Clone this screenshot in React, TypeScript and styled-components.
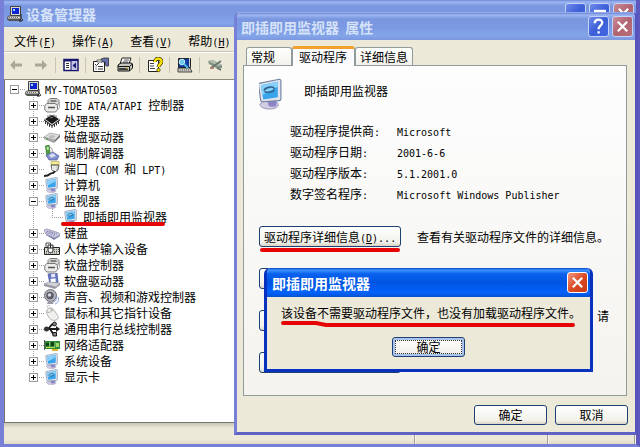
import React from 'react';
import styled, { createGlobalStyle, css } from 'styled-components';

const GlobalStyle = createGlobalStyle`
  * { box-sizing: border-box; }
  body {
    margin: 0;
    color: #000;
    font: 12px/16px "Noto Sans CJK SC", sans-serif;
  }
  button { font: inherit; color: inherit; padding: 0; margin: 0; }
`;

/* Half-width characters: exactly half of the 12px ideograph cell */
const Latin = styled.span`
  font-family: "DejaVu Sans Mono", monospace;
  font-size: 10px;
  line-height: 10px;
  white-space: pre;
`;

/* ---------- window frames ---------- */

const Desktop = styled.main`
  position: relative;
  min-height: 100vh;
  display: flex;
  overflow: hidden;
  background: #7b93dc;
`;

const MainWindow = styled.section`
  flex: 1;
  min-width: 0;
  display: flex;
  flex-direction: column;
  border: solid #7780d6;
  border-width: 0 4px 3px;
  border-right-color: #5c58bd;
`;

const TitleBar = styled.header<{ $active?: boolean; $height: number }>`
  display: flex;
  align-items: center;
  gap: 3px;
  height: ${(p) => p.$height}px;
  color: ${(p) => (p.$active ? '#fff' : '#d5e2f8')};
  font-size: 14px;
  line-height: 20px;
  font-weight: 700;
  background: ${(p) =>
    p.$active
      ? 'linear-gradient(#0843c8 0, #3d93ff 7%, #0a62ee 20%, #0054e3 50%, #0363fb 85%, #0450d0 100%)'
      : 'linear-gradient(#6d83d2 0, #9db7f2 7%, #7a96df 22%, #7b98e2 50%, #84a5ea 85%, #7b96de 100%)'};
`;

const WindowTitle = styled.h1`
  flex: 1;
  margin: 0;
  font: inherit;
  white-space: pre;
`;

const MainTitleBar = styled(TitleBar)`
  padding: 0 2px 0 3px;
`;

const TitleButton = styled.button<{ $tone: 'blue' | 'dimRed' | 'red' }>`
  display: flex;
  align-items: center;
  justify-content: center;
  width: 21px;
  height: 21px;
  border: 1px solid ${(p) => (p.$tone === 'red' ? '#fff' : '#c3d2f6')};
  border-radius: 3px;
  background: ${(p) =>
    ({
      blue: 'linear-gradient(135deg, #6f8bea, #3d60d8 50%, #4167e0)',
      dimRed: 'linear-gradient(135deg, #c98d98, #b06470 50%, #b86e78)',
      red: 'linear-gradient(135deg, #f09a80, #dc4a26 50%, #c93a16)',
    })[p.$tone]};
`;

/* ---------- main window ---------- */

const MenuBar = styled.nav`
  display: flex;
  gap: 16px;
  height: 25px;
  padding: 3px 10px 0;
  align-items: center;
  background: #ece9d8;
  border-bottom: 1px solid #cbc7b5;
`;

const MenuButton = styled.button`
  border: 0;
  background: none;
  white-space: nowrap;
`;

const ToolBar = styled.div`
  display: flex;
  align-items: center;
  height: 28px;
  padding: 0 5px 3px;
  background: #ece9d8;
  border-top: 1px solid #fff;
  border-bottom: 1px solid #8d8b7c;
`;

const ToolGroup = styled.div`
  display: flex;
  gap: 8px;
  padding: 0 6px 0 7px;
  & + & { border-left: 1px solid #c9c5b2; }
  &:first-child { padding-left: 0; }
`;

const ToolButton = styled.button`
  display: flex;
  border: 0;
  background: none;
`;

const TreePane = styled.div`
  flex: 1;
  padding: 1px 5px;
  background: #fff;
  border-left: 1px solid #77766c;
`;

const StatusBar = styled.footer`
  display: grid;
  grid-template-columns: 412px 133px 1fr;
  height: 22px;
  padding-top: 2px;
  background: linear-gradient(#c9c5b4, #ece9d8 25%, #ece9d8 80%, #dfdbc8);
  border-top: 1px solid #77766c;
`;

const StatusCell = styled.div`
  border-right: 2px groove #f5f3ea;
`;

/* ---------- tree ---------- */

const dotsDown = 'repeating-linear-gradient(#a09f98 0 1px, transparent 1px 2px)';
const dotsAcross = 'repeating-linear-gradient(90deg, #a09f98 0 1px, transparent 1px 2px)';

const TreeList = styled.ul`
  margin: 0;
  padding: 0;
  list-style: none;
`;

const TreeRow = styled.li<{ $root?: boolean }>`
  display: flex;
  align-items: center;
  height: 16px;
  padding-left: ${(p) => (p.$root ? 0 : 19)}px;
  white-space: nowrap;
`;

const Passing = styled.span`
  width: 19px;
  height: 16px;
  background: ${dotsDown} 4px 0 / 1px 16px no-repeat;
`;

const Branch = styled.span<{ $down: 'none' | 'half' | 'full' }>`
  display: flex;
  align-items: center;
  width: 15px;
  height: 16px;
  background:
    ${dotsAcross} 4px 8px / 11px 1px no-repeat,
    ${dotsDown} 4px 0 / 1px ${(p) => ({ none: 0, half: 8, full: 16 })[p.$down]}px no-repeat;
`;

const Expander = styled.button`
  display: flex;
  width: 9px;
  height: 9px;
  border: 1px solid #9a9a96;
  background: #fff;
`;

const TreeLabel = styled.span`
  padding-left: 4px;
`;

/* ---------- properties dialog ---------- */

const Dialog = styled.section`
  position: absolute;
  top: 12px;
  left: 234px;
  right: 2px;
  display: flex;
  flex-direction: column;
  border: 3px solid #7780d6;
  border-top: 1px solid #92a9ec;
  border-right-color: #5653bd;
  border-bottom-color: #6163c4;
  border-radius: 6px 6px 0 0;
  overflow: hidden;
  background: #ece9d8;
`;

const DialogTitleBar = styled(TitleBar)`
  padding: 0 2px 0 4px;
`;

const TabStrip = styled.div`
  display: flex;
  align-items: flex-end;
  height: 25px;
  padding: 0 9px;
`;

const Tab = styled.button<{ $active?: boolean }>`
  position: relative;
  height: 18px;
  border: 1px solid #919b9c;
  border-bottom: 0;
  border-radius: 3px 3px 0 0;
  padding: 0 4px;
  text-align: left;
  background: linear-gradient(#fff, #f2f1ea);
  ${(p) =>
    p.$active &&
    css`
      height: 20px;
      margin-bottom: -1px;
      border-top: 3px solid #f2a12d;
      background: #fcfcfe;
      padding: 0 7px 2px 6px;
    `}
  &:first-child { width: 46px; }
`;

const TabPanel = styled.div`
  margin: 0 8px 0 6px;
  height: 331px;
  padding: 12px 17px 0 15px;
  border: 1px solid #919b9c;
  background: linear-gradient(#fdfdfe, #f4f3ee);
`;

const DeviceHeading = styled.div`
  display: flex;
  gap: 14px;
  height: 42px;
`;

const DeviceName = styled.span`
  padding-top: 5px;
`;

const Facts = styled.dl`
  display: grid;
  grid-template-columns: 107px 1fr;
  margin: 0 0 22px;
  padding-left: 31px;
  line-height: 22px;
  dt, dd { margin: 0; height: 21px; }
`;

const ActionList = styled.div`
  display: grid;
  gap: 21px;
`;

const ActionRow = styled.div`
  display: grid;
  grid-template-columns: 142px 192px;
  column-gap: 16px;
  height: 21px;
  align-items: center;
`;

const XpButton = styled.button<{ $focused?: boolean }>`
  height: 20px;
  border: 1px solid #1d4170;
  border-radius: 3px;
  background: linear-gradient(#fff, #f2f1ea 80%, #d9d4c6);
  white-space: nowrap;
  line-height: 16px;
  ${(p) =>
    p.$focused &&
    css`
      width: 73px;
      box-shadow: inset 0 0 0 2px #a9c2ee;
      outline: 1px dotted #333;
      outline-offset: -4px;
    `}
`;

const ActionButton = styled(XpButton)`
  position: relative;
  height: 21px;
  padding-left: 4px;
  text-align: left;
`;

const RedBar = styled.span`
  position: absolute;
  left: 0;
  right: 0;
  top: 21px;
  height: 4px;
  border-radius: 2px;
  background: #e60404;
`;

const ActionText = styled.span`
  white-space: nowrap;
`;

const WrappedActionText = styled.span`
  align-self: start;
  text-align: right;
  line-height: 12px;
`;

const DialogFooter = styled.div`
  display: flex;
  justify-content: flex-end;
  gap: 8px;
  padding: 9px 7px 7px;
  ${XpButton} { width: 73px; }
`;

/* ---------- message box ---------- */

const MessageBox = styled.section`
  position: absolute;
  top: 268px;
  left: 264px;
  right: 47px;
  border: 3px solid #0831c0;
  border-top: 0;
  border-radius: 6px 6px 0 0;
  background: #ece9d8;
  overflow: hidden;
`;

const MessageTitleBar = styled(TitleBar)`
  margin: 0 -3px;
  padding: 0 5px 0 8px;
`;

const MessageBody = styled.div`
  display: flex;
  flex-direction: column;
  align-items: center;
  padding: 8px 0 12px;
`;

const MessageText = styled.p`
  position: relative;
  align-self: flex-start;
  margin: 0 0 16px 14px;
  white-space: nowrap;
`;

const MarkerStroke = styled.svg`
  position: absolute;
  left: 0;
  top: 15px;
`;

const ItemMarker = styled.span`
  position: absolute;
  left: -22px;
  right: 2px;
  top: 14px;
  height: 4px;
  border-radius: 2px;
  background: #e60404;
`;

const MarkedLabel = styled.span`
  position: relative;
`;

/* ---------- icons ---------- */

const Svg = ({ children, size = 16 }: { children: React.ReactNode; size?: number }) => (
  <svg width={size} height={size} viewBox="0 0 16 16" aria-hidden="true">{children}</svg>
);

const HostIcon = () => (
  <Svg>
    <path d="M3.5 .5h10v9h-10z" fill="#d8d8d0" stroke="#444" />
    <path d="M5 2h7v6H5z" fill="#0c23d0" />
    <path d="M6 3h2v2H6z" fill="#9fd4ff" />
    <path d="M1.5 10h11.500l1.500 3H0z" fill="#e6e6dd" stroke="#333" strokeWidth=".8" />
    <path d="M0 13h14v2H2z" fill="#555" />
    <path d="M2 11.500h9" stroke="#666" strokeDasharray="1 1" />
    <path d="M14 8v5l-2 2h3l1-2" fill="none" stroke="#222" />
  </Svg>
);

const CardIcon = () => (
  <Svg>
    <path d="M6 1.500h7l2 2v3l-2 2H6l-2-2v-3z" fill="#d4d4d0" stroke="#7a7a78" />
    <path d="M6.500 4h6" stroke="#666" strokeWidth="1.500" />
    <path d="M3 6.500h8l2.500 2v4l-2 2.500H3L.8 13V8.500z" fill="#ececea" stroke="#7a7a78" />
    <path d="M4 10.500h7" stroke="#555" strokeWidth="1.500" />
    <path d="M13.500 13l2-2.500v-5" stroke="#aaa" fill="none" />
  </Svg>
);

const ChipIcon = () => (
  <Svg>
    <path d="M1 6l7-4 7 4-7 5z" fill="#1a1a1a" />
    <path d="M0 6l8 6 8-6v1.500l-8 6-8-6z" fill="#3a3a3a" />
    <path d="M1.500 8v3M3.500 9.500v3M5.500 11v3M8 12v3M10.500 11v3M12.500 9.500v3M14.500 8v3" stroke="#333" />
    <path d="M4 2.500v2M6 1.500v2M10 1.500v2M12 2.500v2" stroke="#555" />
    <path d="M6 5l3-1" stroke="#aaa" strokeWidth=".7" />
  </Svg>
);

const DiskIcon = () => (
  <Svg>
    <path d="M0 8l6-4 10 2-5 5z" fill="#dedede" stroke="#9a9a9a" strokeWidth=".7" />
    <path d="M0 8v2l10 4 1-3z" fill="#a4a4a4" />
    <path d="M11 11l5-5v2l-6 6z" fill="#6e6e6e" />
    <ellipse cx="8" cy="7.500" rx="3" ry="1.500" fill="#bcbcbc" />
    <path d="M2 9.500l2 1" stroke="#3aa23a" />
  </Svg>
);

const ModemIcon = () => (
  <Svg>
    <path d="M1.500 1l3.500-1 1 8-3 4z" fill="#4ca23d" stroke="#2c6d28" strokeWidth=".7" />
    <path d="M2.500 2l2-.5.500 3-2 .5z" fill="#bfe6a6" />
    <path d="M2 10l7-3 6 4-2 4H5z" fill="#7f8fd0" stroke="#555f96" strokeWidth=".7" />
    <path d="M5 10l4-2 3 3-5 2z" fill="#d6daf2" />
    <path d="M6 2c2 1 3 3 2 5" stroke="#999" fill="none" />
  </Svg>
);

const PortIcon = () => (
  <Svg>
    <path d="M7 .5h8v3H7z" fill="#f7ef98" stroke="#b5ac4a" strokeWidth=".7" />
    <path d="M7 4h8l-1 5-3 2-3-2z" fill="#d2d2ca" stroke="#444" strokeWidth=".8" />
    <path d="M10.500 10c0 3-3 1.500-4.500 3S3 15 0 15" stroke="#222" strokeWidth="1.800" fill="none" />
    <path d="M9 5v4M11 5v5" stroke="#fff" />
  </Svg>
);

const MonitorShape = ({ mark }: { mark?: boolean }) => (
  <>
    <path d="M2.500 13.500c0-1 2-2 5-2s4.500 1 4.500 2-1.500 2.300-4.500 2.300-5-1.200-5-2.300z" fill="#d0cde2" stroke="#8986ae" strokeWidth=".4" />
    <path d="M6 10.500l5 1v2.500c-1 .8-3 .8-4 0z" fill="#8d86c6" />
    <path d="M2 2.500L12.500 .4c.4 0 .7.200.8.700v9.400c0 .6-.2.900-.7.900L3.700 12c-.5 0-.7-.2-.8-.6L1.700 3.200c0-.4 0-.6.300-.7z" fill="#e2e3ec" stroke="#6f83a2" strokeWidth=".6" />
    <path d="M2.900 3.500L11.700 1.700v8L4.200 10.800z" fill="#38a4ea" />
    <path d="M2.900 3.500l8.800-1.800v2.500L3.800 8.500z" fill="#86d0fa" />
    {mark && <path d="M4.500 6.200c1.200-2 5-2.400 5.500-.8M4.800 6.800c2 .6 4 .2 5.200-.8" fill="none" stroke="#2f5f8d" strokeWidth=".8" />}
  </>
);

const ComputerIcon = () => <Svg><MonitorShape /></Svg>;
const MonitorIcon = () => <Svg><MonitorShape mark /></Svg>;

const KeyboardIcon = () => (
  <Svg>
    <path d="M0 5l3-1 12 4 1 2-6 3-8-4z" fill="#cfcfe4" stroke="#8888ac" strokeWidth=".7" />
    <path d="M3 6l9 4M2 7l8 4M5 6l8 3" stroke="#7f7fa8" strokeDasharray="1.500 1" />
    <path d="M2 9l8 4 6-3v1l-6 4-8-5z" fill="#8383ae" />
  </Svg>
);

const HidIcon = () => (
  <Svg>
    <path d="M.5 6.500h15v7H.5z" fill="#d7d7cf" stroke="#222" />
    <path d="M10 8.500h5M2 10.500h13M2 12h12" stroke="#555" strokeDasharray="1 1" />
    <path d="M4 4h5v5c0 2-1 2.500-2.500 2.500S4 11 4 9z" fill="#fff" stroke="#222" />
    <path d="M4 7h5M6.500 4v3" stroke="#222" />
    <path d="M6.500 4V2H2v5" stroke="#444" fill="none" />
  </Svg>
);

const FloppyIcon = () => (
  <Svg>
    <path d="M4 1l9-1 1 9-8 2z" fill="#6576c4" stroke="#414f96" strokeWidth=".7" />
    <path d="M7 1l4-.5.3 3.500-4 .5z" fill="#e4e7f6" />
    <path d="M6.500 6l5-.7.3 4-5 1z" fill="#fff" />
    <path d="M0 11l5-2 11 1-4 4z" fill="#d4d4da" stroke="#8b8b95" strokeWidth=".7" />
    <path d="M0 11v2l11 3 5-4v-2l-4 4z" fill="#9999a6" />
  </Svg>
);

const SoundIcon = () => (
  <Svg>
    <circle cx="6.500" cy="6.500" r="6" fill="#b5b5bd" stroke="#6c6c76" />
    <circle cx="6" cy="6.500" r="3.800" fill="#5d5d68" />
    <circle cx="5.500" cy="6" r="1.800" fill="#d8d8e0" />
    <path d="M4 12l-1 3h6l1-3" fill="#9b9ba6" />
    <path d="M12 8c1 2 0 4-2 5M14 8c1.500 3 0 6-3 7" fill="none" stroke="#7b8fe0" strokeWidth=".9" />
  </Svg>
);

const MouseIcon = () => (
  <Svg>
    <path d="M3 5c3-4 6-2 9 3 3 4 3 6 0 7-3 1-6 0-8-4-1-2-2-4-1-6z" fill="#f0f0ee" stroke="#9e9e9a" strokeWidth=".8" />
    <path d="M3 7c2 1 5 0 6-3M6 3l2 3" fill="none" stroke="#a9a9a5" />
    <path d="M4 3C2 1 4 0 6 1" stroke="#b9b9b4" fill="none" />
  </Svg>
);

const UsbIcon = () => (
  <Svg>
    <path d="M2 8h11M4 8l4-4.500h3M6 8l3 4.500h2" fill="none" stroke="#1c1c1c" strokeWidth="1.800" />
    <circle cx="2.500" cy="8" r="2.500" fill="#333" />
    <path d="M12 5l4 3-4 3z" fill="#1c1c1c" />
    <circle cx="10.500" cy="3" r="1.900" fill="#888" stroke="#1c1c1c" />
    <path d="M9 11.500h3.500V15H9z" fill="#888" stroke="#1c1c1c" />
  </Svg>
);

const NetworkIcon = () => (
  <Svg>
    <path d="M0 4h16v8H0z" fill="#2d8a35" />
    <path d="M.5 3v10" stroke="#555" />
    <path d="M2 6h3v3H2zM7 5h3v4H7z" fill="#143f1a" />
    <path d="M12 6h3v4h-3z" fill="#a5d86c" />
    <path d="M2 10.500h9" stroke="#c2d850" />
    <path d="M8 12h6v2H8z" fill="#d9b92f" />
    <path d="M5.500 5v5M11 5v5" stroke="#7fc270" />
  </Svg>
);

const ArrowIcon = ({ back }: { back?: boolean }) => (
  <Svg>
    <path d={back ? 'M1 8l5-5v3.500h7v3H6V13z' : 'M14 8L9 3v3.500H2v3h7V13z'} fill="#a9a796" />
  </Svg>
);

const PaneIcon = () => (
  <Svg>
    <path d="M1 2.500h14v11H1z" fill="#fff" stroke="#16166c" strokeWidth="1.500" />
    <path d="M1 3h14v1.500H1z" fill="#16166c" />
    <path d="M8 4h6v9H8z" fill="#c2c2e4" />
    <path d="M8 4v9" stroke="#16166c" />
    <path d="M3 6.500h3M3 8.500h3M3 10.500h3" stroke="#333" />
    <path d="M13 5.500v6L9.500 8.500z" fill="#16166c" />
  </Svg>
);

const PropertiesIcon = () => (
  <Svg>
    <path d="M.5 4.500h11v10H.5z" fill="#fff" stroke="#222" />
    <path d="M2 7l1.500 1.500L6 6M5 9.500h5M5 12h5" fill="none" stroke="#333" />
    <path d="M2.500 10h1M2.500 12h1" stroke="#333" />
    <path d="M8 2l3-1h4.500v8h-2.500l-1-4H8z" fill="#6671ae" stroke="#222" strokeWidth=".7" />
    <path d="M4 3h5v2H4z" fill="#eee" stroke="#333" strokeWidth=".7" />
  </Svg>
);

const PrintIcon = () => (
  <Svg>
    <path d="M5 1h9l-2 6H3z" fill="#fff" stroke="#222" />
    <path d="M7 3h5M6 5h5" stroke="#555" />
    <path d="M1 8l3-2h10l1.500 1v4l-3 3H1z" fill="#c8c8bf" stroke="#111" />
    <path d="M1 9.500h11.500l3-2.500M12.500 10v4" fill="none" stroke="#111" />
    <path d="M2 12h9" stroke="#111" strokeWidth="1.500" />
    <path d="M9 11h2" stroke="#e5d93d" />
  </Svg>
);

const HelpIcon = () => (
  <Svg>
    <path d="M1.500 3.500h10v11h-10z" fill="#fff" stroke="#222" />
    <path d="M3 6.500h4M3 9h4M3 11.500h5" stroke="#444" />
    <path d="M8 5c0-5 7-4 6.500 0-.3 2-3 2.500-3 5" fill="none" stroke="#3a3500" strokeWidth="3.600" />
    <path d="M8 5c0-5 7-4 6.500 0-.3 2-3 2.500-3 5" fill="none" stroke="#ffe800" strokeWidth="2.300" />
    <circle cx="11.500" cy="13" r="1.700" fill="#ffe800" stroke="#3a3500" strokeWidth=".7" />
  </Svg>
);

const ScanIcon = () => (
  <Svg>
    <path d="M1.500 1.500h12v9h-12z" fill="#0f3c9e" stroke="#222" />
    <path d="M12.500 1v9" stroke="#ccc" />
    <path d="M1 11h12l2 4H1z" fill="#c9c9c2" stroke="#222" strokeWidth=".8" />
    <circle cx="5" cy="5" r="2.800" fill="#6cc8ea" stroke="#c9f1ff" />
    <path d="M7 7l4 4" stroke="#49b8dc" strokeWidth="2" />
    <path d="M3 13h9" stroke="#555" strokeDasharray="1 1" />
  </Svg>
);

const UninstallIcon = () => (
  <Svg>
    <path d="M1 4l5-1 9 5v3l-4 1-9-5z" fill="#829184" />
    <path d="M1 4l5-1 9 5-4 1z" fill="#b3bfae" />
    <path d="M14 4L4 11M10 11l4 2" stroke="#69766b" strokeWidth="1.800" />
    <path d="M3 11h4" stroke="#a96f63" strokeWidth="1.500" />
  </Svg>
);

const CloseGlyph = () => (
  <Svg size={15}><path d="M3 3l10 10M13 3L3 13" stroke="#fff" strokeWidth="2.400" /></Svg>
);
const QuestionGlyph = () => (
  <Svg size={17}>
    <path d="M4.500 5c0-4.500 7-4.500 7-.5 0 2.500-3.500 3-3.500 6" fill="none" stroke="#fff" strokeWidth="2.200" />
    <path d="M7 12.500h2.200v2.200H7z" fill="#fff" />
  </Svg>
);
const MinimizeGlyph = () => <Svg size={15}><path d="M3 11h6v3H3z" fill="#fff" /></Svg>;
const MaximizeGlyph = () => (
  <Svg size={15}>
    <path d="M3 5h11v9H3z" fill="none" stroke="#fff" strokeWidth="1.500" />
    <path d="M2.300 5.500h12.400" stroke="#fff" strokeWidth="3" />
  </Svg>
);

const DeviceIcon = () => (
  <svg width="31" height="32" viewBox="2 0 16 16" aria-hidden="true"><MonitorShape mark /></svg>
);

/* ---------- data ---------- */

type Device = { name: React.ReactNode; label: string; icon: React.FC; open?: boolean };

const devices: Device[] = [
  { name: <><Latin>IDE ATA/ATAPI </Latin>控制器</>, label: 'IDE', icon: CardIcon },
  { name: '处理器', label: '处理器', icon: ChipIcon },
  { name: '磁盘驱动器', label: '磁盘驱动器', icon: DiskIcon },
  { name: '调制解调器', label: '调制解调器', icon: ModemIcon },
  { name: <>端口<Latin> (COM </Latin>和<Latin> LPT)</Latin></>, label: '端口', icon: PortIcon },
  { name: '计算机', label: '计算机', icon: ComputerIcon },
  { name: '监视器', label: '监视器', icon: MonitorIcon, open: true },
  { name: '键盘', label: '键盘', icon: KeyboardIcon },
  { name: '人体学输入设备', label: '人体学输入设备', icon: HidIcon },
  { name: '软盘控制器', label: '软盘控制器', icon: CardIcon },
  { name: '软盘驱动器', label: '软盘驱动器', icon: FloppyIcon },
  { name: '声音、视频和游戏控制器', label: '声音', icon: SoundIcon },
  { name: '鼠标和其它指针设备', label: '鼠标', icon: MouseIcon },
  { name: '通用串行总线控制器', label: '通用串行总线', icon: UsbIcon },
  { name: '网络适配器', label: '网络适配器', icon: NetworkIcon },
  { name: '系统设备', label: '系统设备', icon: ComputerIcon },
  { name: '显示卡', label: '显示卡', icon: MonitorIcon },
];

const menus = [['文件', 'F'], ['操作', 'A'], ['查看', 'V'], ['帮助', 'H']];

const facts = [
  ['驱动程序提供商', 'Microsoft'],
  ['驱动程序日期', '2001-6-6'],
  ['驱动程序版本', '5.1.2001.0'],
  ['数字签名程序', 'Microsoft Windows Publisher'],
];

const Toggle = ({ open, label }: { open?: boolean; label: string }) => (
  <Expander aria-label={label} aria-expanded={!!open}>
    <svg width="7" height="7" viewBox="0 0 7 7" shapeRendering="crispEdges" aria-hidden="true">
      <path d="M1 3h5v1H1z" />
      {!open && <path d="M3 1h1v5H3z" />}
    </svg>
  </Expander>
);

export default function App() {
  return (
    <Desktop>
      <GlobalStyle />
      <MainWindow>
        <MainTitleBar $height={27}>
          <HostIcon />
          <WindowTitle>设备管理器</WindowTitle>
          <TitleButton $tone="blue" aria-label="最小化"><MinimizeGlyph /></TitleButton>
          <TitleButton $tone="blue" aria-label="最大化"><MaximizeGlyph /></TitleButton>
          <TitleButton $tone="dimRed" aria-label="关闭"><CloseGlyph /></TitleButton>
        </MainTitleBar>
        <MenuBar>
          {menus.map(([text, key]) => (
            <MenuButton key={key}>{text}<Latin>(<u>{key}</u>)</Latin></MenuButton>
          ))}
        </MenuBar>
        <ToolBar>
          <ToolGroup>
            <ToolButton aria-label="后退"><ArrowIcon back /></ToolButton>
            <ToolButton aria-label="前进"><ArrowIcon /></ToolButton>
          </ToolGroup>
          <ToolGroup><ToolButton aria-label="显示窗格"><PaneIcon /></ToolButton></ToolGroup>
          <ToolGroup>
            <ToolButton aria-label="属性"><PropertiesIcon /></ToolButton>
            <ToolButton aria-label="打印"><PrintIcon /></ToolButton>
          </ToolGroup>
          <ToolGroup><ToolButton aria-label="帮助"><HelpIcon /></ToolButton></ToolGroup>
          <ToolGroup><ToolButton aria-label="扫描"><ScanIcon /></ToolButton></ToolGroup>
          <ToolGroup><ToolButton aria-label="卸载"><UninstallIcon /></ToolButton></ToolGroup>
        </ToolBar>
        <TreePane>
          <TreeList>
            <TreeRow $root>
              <Branch $down="none"><Toggle open label="MY-TOMATO503" /></Branch>
              <HostIcon />
              <TreeLabel><Latin>MY-TOMATO503</Latin></TreeLabel>
            </TreeRow>
            {devices.map(({ name, label, icon: Icon, open }, i) => (
              <React.Fragment key={label}>
                <TreeRow>
                  <Branch $down={i === devices.length - 1 ? 'half' : 'full'}>
                    <Toggle open={open} label={label} />
                  </Branch>
                  <Icon />
                  <TreeLabel>{name}</TreeLabel>
                </TreeRow>
                {open && (
                  <TreeRow>
                    <Passing />
                    <Branch $down="half" />
                    <MonitorIcon />
                    <TreeLabel><MarkedLabel>即插即用监视器<ItemMarker /></MarkedLabel></TreeLabel>
                  </TreeRow>
                )}
              </React.Fragment>
            ))}
          </TreeList>
        </TreePane>
        <StatusBar><StatusCell /><StatusCell /><StatusCell /></StatusBar>
      </MainWindow>

      <Dialog role="dialog" aria-label="即插即用监视器 属性">
        <DialogTitleBar $height={27}>
          <WindowTitle>即插即用监视器  属性</WindowTitle>
          <TitleButton $tone="blue" aria-label="帮助"><QuestionGlyph /></TitleButton>
          <TitleButton $tone="dimRed" aria-label="关闭"><CloseGlyph /></TitleButton>
        </DialogTitleBar>
        <TabStrip role="tablist">
          <Tab role="tab">常规</Tab>
          <Tab role="tab" $active aria-selected="true">驱动程序</Tab>
          <Tab role="tab">详细信息</Tab>
        </TabStrip>
        <TabPanel role="tabpanel">
          <DeviceHeading>
            <DeviceIcon />
            <DeviceName>即插即用监视器</DeviceName>
          </DeviceHeading>
          <Facts>
            {facts.map(([term, value]) => (
              <React.Fragment key={term}>
                <dt>{term}<Latin>:</Latin></dt>
                <dd><Latin>{value}</Latin></dd>
              </React.Fragment>
            ))}
          </Facts>
          <ActionList>
            <ActionRow>
              <ActionButton>驱动程序详细信息<Latin>(<u>D</u>)...</Latin><RedBar /></ActionButton>
              <ActionText>查看有关驱动程序文件的详细信息。</ActionText>
            </ActionRow>
            <ActionRow><ActionButton aria-label="更新驱动程序" /></ActionRow>
            <ActionRow>
              <ActionButton aria-label="返回驱动程序" />
              <WrappedActionText>请</WrappedActionText>
            </ActionRow>
            <ActionRow><ActionButton aria-label="卸载" /></ActionRow>
          </ActionList>
        </TabPanel>
        <DialogFooter>
          <XpButton>确定</XpButton>
          <XpButton>取消</XpButton>
        </DialogFooter>
      </Dialog>

      <MessageBox role="alertdialog" aria-label="即插即用监视器">
        <MessageTitleBar $active $height={29}>
          <WindowTitle>即插即用监视器</WindowTitle>
          <TitleButton $tone="red" aria-label="关闭"><CloseGlyph /></TitleButton>
        </MessageTitleBar>
        <MessageBody>
          <MessageText>
            该设备不需要驱动程序文件，也没有加载驱动程序文件。
            <MarkerStroke width="300" height="8" viewBox="0 0 300 8" aria-hidden="true">
              <path d="M2 3h33l10 2h247" fill="none" stroke="#e60404" strokeWidth="4" strokeLinecap="round" />
            </MarkerStroke>
          </MessageText>
          <XpButton $focused>确定</XpButton>
        </MessageBody>
      </MessageBox>
    </Desktop>
  );
}
